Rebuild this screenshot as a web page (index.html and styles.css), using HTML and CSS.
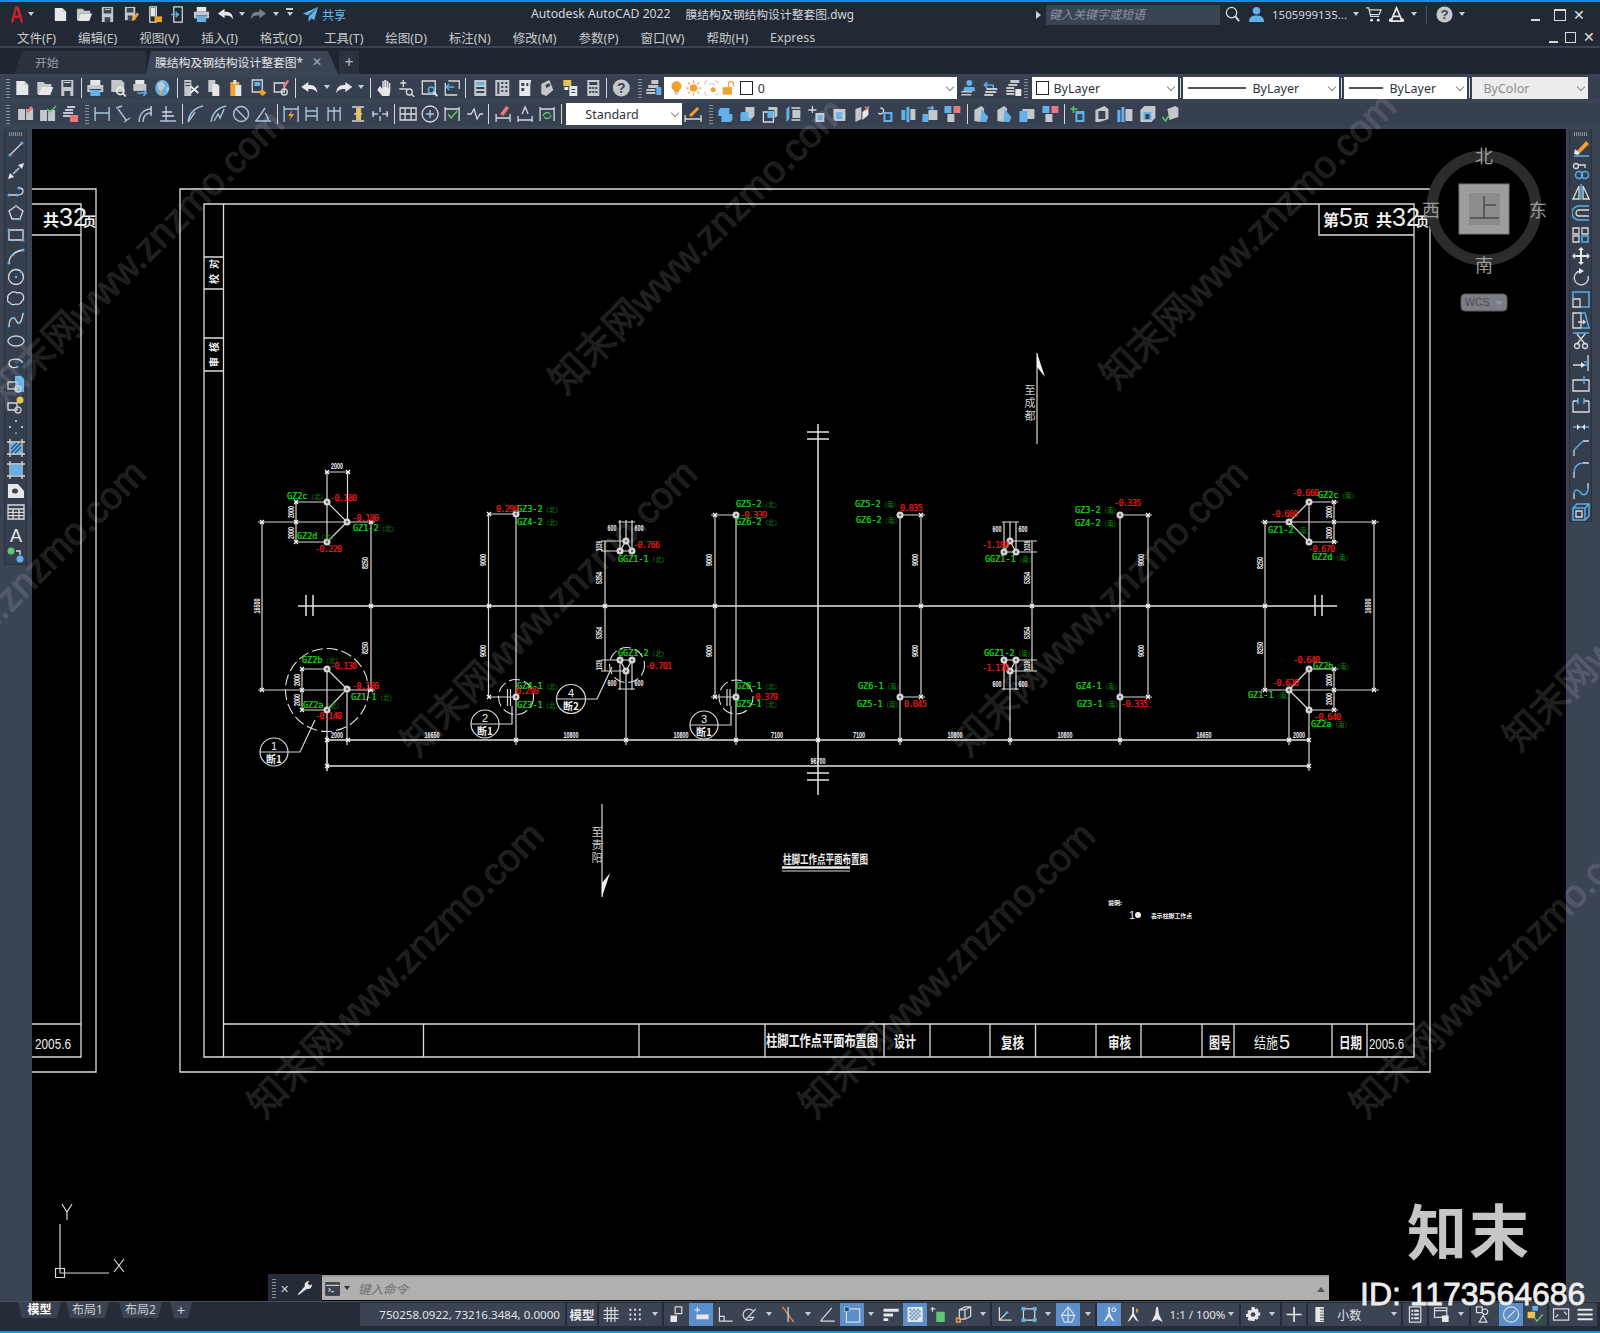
FILE: index.html
```html
<!DOCTYPE html>
<html lang="zh">
<head>
<meta charset="utf-8">
<title>Autodesk AutoCAD 2022</title>
<link rel="stylesheet" href="styles.css">
</head>
<body>
<svg class="defs" xmlns="http://www.w3.org/2000/svg">
<symbol id="new" viewBox="0 0 18 18"><path class="fw" d="M3 2h8l4 4v10H3z"/><path class="fg2" d="M11 2v4h4z"/></symbol>
<symbol id="open" viewBox="0 0 18 18"><path class="fg2" d="M1 3h6l2 2h6v3H5l-2 7H1z"/><path class="fw" d="M5 8h12l-3 8H2z"/></symbol>
<symbol id="save" viewBox="0 0 18 18"><path class="fg2" d="M3 1h12v16H3z"/><path class="fd" d="M5 2h8v6H5zM6 12h6v5H6z"/><path class="fw" d="M6 3h6v1H6z"/></symbol>
<symbol id="saveas" viewBox="0 0 18 18"><path class="fg2" d="M2 1h11v14H2z"/><path class="fd" d="M4 2h7v5H4zM5 10h5v5H5z"/><path class="fo" d="M9 16l1-3 5-6 2 2-5 6z"/></symbol>
<symbol id="sheetset" viewBox="0 0 18 18"><path class="w" d="M4 1h7v16H4z"/><path class="fw" d="M5 2h5v9H5z"/><path class="fo" d="M9 11h8v6H9z"/></symbol>
<symbol id="phone" viewBox="0 0 18 18"><path class="w" d="M4 1h9v16H4z"/><path class="bs" d="M1 9h8M6 6l3 3-3 3"/></symbol>
<symbol id="print" viewBox="0 0 18 18"><path class="fw" d="M4 1h10v5H4z"/><path class="fg2" d="M1 6h16v7H1z"/><path class="fd" d="M3 10h12v1H3z"/><path class="fb" d="M4 11h10v6H4z"/></symbol>
<symbol id="preview" viewBox="0 0 18 18"><path class="fg2" d="M2 1h10l3 3v9H2z"/><circle class="w2" cx="11" cy="12" r="3.5"/><path class="w2" d="M13.5 14.500l3 3"/></symbol>
<symbol id="publish" viewBox="0 0 18 18"><path class="fw" d="M4 1h9v4H4z"/><path class="fg2" d="M2 5h13v7H2z"/><path class="bs" d="M6 14h9M12 11l3 3-3 3"/></symbol>
<symbol id="globe" viewBox="0 0 18 18"><path class="fb" d="M8 1a7 8 0 1 1-.1 0z"/><path class="fg2" d="M3 5l5-3 3 5-4 5-3-2zM12 8l3 1-2 5z"/><path class="fo" d="M5 12h3v3H5z"/></symbol>
<symbol id="cut" viewBox="0 0 18 18"><path class="fg2" d="M2 1h7v16H2z"/><path class="fd" d="M3 3h5v1H3zM3 6h5v1H3z"/><path class="w2" d="M8 7l8 7M16 7l-8 7"/></symbol>
<symbol id="copy" viewBox="0 0 18 18"><path class="fg2" d="M3 1h7v12H3z"/><path class="fw" d="M7 5h5l2 2v10H7z"/></symbol>
<symbol id="paste" viewBox="0 0 18 18"><path class="fo" d="M3 3h9v14H3z"/><path class="fw" d="M6 1h3v4H6zM8 6h6v11H8z"/></symbol>
<symbol id="match" viewBox="0 0 18 18"><path class="w" d="M2 1h10v12H2z"/><path class="fb" d="M4 3h6v4H4z"/><path class="fo" d="M8 13l4-3 4 4-4 3z"/></symbol>
<symbol id="brush" viewBox="0 0 18 18"><path class="w" d="M2 4h10v9H2z"/><circle class="w" cx="12" cy="13" r="3"/><path class="fr" d="M10 7l5-6 2 1-4 6z"/></symbol>
<symbol id="undo" viewBox="0 0 18 18"><path class="fw" d="M1 8l7-5v3h2c4 0 7 3 7 8-2-3-4-4-7-4H8v3z"/></symbol>
<symbol id="redo" viewBox="0 0 18 18"><path class="fw" d="M17 8l-7-5v3H8c-4 0-7 3-7 8 2-3 4-4 7-4h2v3z"/></symbol>
<symbol id="pan" viewBox="0 0 18 18"><path class="fw" d="M4 8l1-1 2 3V2h1.500v6h.5V1h2v7h.5V2h1.500v7h.5V4h1.500v8l-1 5H7L2 11z"/></symbol>
<symbol id="zoomrt" viewBox="0 0 18 18"><path class="w" d="M6 1v7M3 4h6M2 10h8"/><circle class="w" cx="12" cy="13" r="3"/><path class="w" d="M14 15l3 3"/></symbol>
<symbol id="zoomwin" viewBox="0 0 18 18"><path class="w" d="M2 2h13v13H2z"/><circle class="bs" cx="11" cy="11" r="3"/><path class="w2" d="M13 13l4 4"/></symbol>
<symbol id="zoomprev" viewBox="0 0 18 18"><path class="w" d="M2 4v12h12M5 2h11v8"/><path class="bs" d="M3 8h8M6 5L3 8l3 3"/></symbol>
<symbol id="prop" viewBox="0 0 18 18"><path class="fg2" d="M3 1h12v16H3z"/><path class="fb" d="M5 3h8v3H5z"/><path class="fd" d="M5 8h8v2H5zM5 12h8v2H5z"/></symbol>
<symbol id="design" viewBox="0 0 18 18"><path class="fg2" d="M2 1h14v16H2z"/><path class="fd" d="M4 3h2v12H4zM8 3h2v2H8zM8 7h2v2H8zM8 11h2v2H8zM12 3h2v2h-2zM12 7h2v2h-2zM12 11h2v2h-2z"/></symbol>
<symbol id="toolp" viewBox="0 0 18 18"><path class="fw" d="M3 1h12l-1 4v12H3z"/><path class="fd" d="M5 4h3v3H5zM5 9h3v3H5zM10 4h2v3h-2z"/></symbol>
<symbol id="sheet" viewBox="0 0 18 18"><path class="fg2" d="M3 5l8-4 4 10-7 6-5-2z"/><path class="fd" d="M7 6l4-2 1 3-4 2z"/></symbol>
<symbol id="mark" viewBox="0 0 18 18"><path class="fy" d="M2 1h8v6H2z"/><path class="fw" d="M8 7h8v10H8zM3 8h4v3H3z"/><path class="fd" d="M10 10h4v1h-4zM10 13h4v1h-4z"/></symbol>
<symbol id="calc" viewBox="0 0 18 18"><path class="fg2" d="M3 1h12v16H3z"/><path class="fd" d="M5 3h8v3H5zM5 8h2v2H5zM8 8h2v2H8zM11 8h2v2h-2zM5 12h2v2H5zM8 12h2v2H8zM11 12h2v2h-2z"/></symbol>
<symbol id="help" viewBox="0 0 18 18"><circle class="fg2" cx="9" cy="9" r="8.500"/><text class="qm" x="9" y="14">?</text></symbol>
<symbol id="layers" viewBox="0 0 18 18"><path class="fg2" d="M7 1h7v4H7zM4 6h10v3H4zM2 10h9v2H2zM2 13h9v2H2z"/><path class="fb" d="M12 8h5v8h-5z"/></symbol>
<symbol id="bulb" viewBox="0 0 18 18"><circle class="fo" cx="9" cy="7" r="6"/><path class="fo" d="M6 11h6v3H6z"/><path class="fg2" d="M7 14h4v3H7z"/></symbol>
<symbol id="sun" viewBox="0 0 18 18"><circle class="fo" cx="9" cy="9" r="4.500"/><path class="os" d="M9 0v3M9 15v3M0 9h3M15 9h3M2.500 2.500l2 2M13.500 13.500l2 2M2.500 15.500l2-2M13.500 4.500l2-2"/></symbol>
<symbol id="freeze" viewBox="0 0 18 18"><path class="gy" d="M1 5V1h4M13 1h4v4M1 13v4h4M13 17h4v-4"/><circle class="fo" cx="11" cy="11" r="3"/><path class="gy" d="M6 4h6v3"/></symbol>
<symbol id="lock" viewBox="0 0 18 18"><path class="fo" d="M2 8h11v9H2z"/><path class="os" d="M9 8V4a3 3 0 0 1 6 0v3"/></symbol>
<symbol id="lay1" viewBox="0 0 18 18"><circle class="fb" cx="10" cy="4" r="3"/><path class="fb" d="M5 8h10l1 4H4z"/><path class="fg2" d="M2 12h11v1.500H2zM2 15h10v1.500H2z"/></symbol>
<symbol id="lay2" viewBox="0 0 18 18"><path class="bs" d="M3 6h9M6 3L3 6l3 3M12 6v5"/><path class="fg2" d="M5 9h11v2H5zM4 12h11v2H4zM3 15h9v2H3z"/></symbol>
<symbol id="lay3" viewBox="0 0 18 18"><path class="fg2" d="M6 1h9v3H6zM4 5h9v2H4zM2 8h8v2H2zM2 11h8v2H2zM2 14h8v2H2z"/><path class="fw" d="M11 10h6v7h-6z"/></symbol>
<symbol id="dim1" viewBox="0 0 18 18"><path class="fg2" d="M1 4h7v11H1zM9 4h7v11H9z"/><path class="fr" d="M9 6l5-5 2 2-5 5z"/></symbol>
<symbol id="dim2" viewBox="0 0 18 18"><path class="fg2" d="M1 5h7v11H1zM9 5h7v11H9z"/><path class="gs" d="M8 4l3 3 6-6"/></symbol>
<symbol id="dim3" viewBox="0 0 18 18"><path class="fg2" d="M6 1h8v2H6zM4 4h8v2H4zM2 7h10v2H2zM2 10h10v2H2z"/><path class="fr" d="M9 10h8v7H9z"/></symbol>
<symbol id="linear" viewBox="0 0 18 18"><path class="b" d="M2 2v14M16 2v14M2 8h14"/></symbol>
<symbol id="aligned" viewBox="0 0 18 18"><path class="b" d="M1 3l6-2M9 17l6-4M3 4l8 11"/></symbol>
<symbol id="darc" viewBox="0 0 18 18"><path class="b" d="M2 17c0-8 5-13 12-13M6 17c0-6 3-9 8-9"/><path class="w" d="M14 1v10"/></symbol>
<symbol id="ordin" viewBox="0 0 18 18"><path class="b" d="M1 16h16M7 1v15"/><path class="w" d="M3 7h10M3 11h12"/></symbol>
<symbol id="radius" viewBox="0 0 18 18"><path class="b" d="M1 17C2 9 7 3 16 1M1 17L8 7"/></symbol>
<symbol id="jogr" viewBox="0 0 18 18"><path class="b" d="M1 17C2 9 7 3 16 1M4 16l4-7 2 4 4-9"/></symbol>
<symbol id="diam" viewBox="0 0 18 18"><circle class="b" cx="9" cy="9" r="7.500"/><path class="b" d="M4 4l10 10"/></symbol>
<symbol id="angle" viewBox="0 0 18 18"><path class="b" d="M1 16h16M2 16L11 3M11 8c2 2 3 5 3 8"/></symbol>
<symbol id="quick" viewBox="0 0 18 18"><path class="b" d="M2 1v16M16 1v16M2 4h14"/><path class="fo" d="M10 5L6 11h3l-2 5 5-7H9z"/></symbol>
<symbol id="base" viewBox="0 0 18 18"><path class="b" d="M2 2v14M13 2v14M2 6h11M2 11h11"/></symbol>
<symbol id="cont" viewBox="0 0 18 18"><path class="b" d="M2 2v14M8 2v14M14 2v14M2 6h12"/></symbol>
<symbol id="space" viewBox="0 0 18 18"><path class="w" d="M3 2h12M3 16h12M5 9h8"/><path class="fy" d="M7 3h5v12H7z"/></symbol>
<symbol id="dbreak" viewBox="0 0 18 18"><path class="b" d="M1 9h6M11 9h6M9 2v5M9 11v5"/><path class="w" d="M2 6v6M16 6v6"/></symbol>
<symbol id="toler" viewBox="0 0 18 18"><path class="w" d="M1 3h16v12H1zM1 9h16M6 3v12M12 3v12"/></symbol>
<symbol id="center" viewBox="0 0 18 18"><circle class="w" cx="9" cy="9" r="8"/><path class="b" d="M9 5v8M5 9h8"/></symbol>
<symbol id="insp" viewBox="0 0 18 18"><path class="w" d="M2 2v14M16 2v14M2 4h14"/><path class="gs" d="M5 9l3 4 6-7"/></symbol>
<symbol id="jogl" viewBox="0 0 18 18"><path class="w" d="M1 9h4l3-5 3 10 3-5h3"/></symbol>
<symbol id="dedit" viewBox="0 0 18 18"><path class="w" d="M2 9v8M16 9v8M2 13h14"/><path class="fr" d="M6 9l6-8 3 2-6 8z"/></symbol>
<symbol id="dtedit" viewBox="0 0 18 18"><path class="w" d="M2 11v6M16 11v6M2 15h14M6 9l3-7 3 7"/></symbol>
<symbol id="dupd" viewBox="0 0 18 18"><path class="w" d="M2 2v14M16 2v14M2 4h14"/><path class="gs" d="M5 11a4 4 0 0 1 7-2M13 10a4 4 0 0 1-7 2"/></symbol>
<symbol id="dstyle" viewBox="0 0 18 18"><path class="w" d="M1 10v7M17 10v7M1 14h16"/><path class="fo" d="M5 10l8-8 2 2-8 8z"/></symbol>
<symbol id="uni" viewBox="0 0 18 18"><path class="fb" d="M4 3h9v6h3v6l-2 2H5v-6H2V6z"/></symbol>
<symbol id="sub" viewBox="0 0 18 18"><path class="fg2" d="M7 2h9v9l-2 2H7z"/><path class="fb" d="M3 7h7v6h4l-2 3H2V9z"/></symbol>
<symbol id="inter" viewBox="0 0 18 18"><path class="fg2" d="M7 2h9v9l-3 2V5H7z"/><path class="w" d="M2 7h10v10H2z"/><path class="fb" d="M6 6h6v7H6z"/></symbol>
<symbol id="imprint" viewBox="0 0 18 18"><path class="fb" d="M2 4l3-3v13l-3 3z"/><path class="w" d="M7 3h9M7 15h9"/><path class="fg2" d="M8 5h8v8H8z"/></symbol>
<symbol id="extru" viewBox="0 0 18 18"><path class="fg2" d="M7 5h9v10H7z"/><path class="fb" d="M1 9h6v8H1z"/><path class="bs" d="M6 3h6M10 1l2 2-2 2"/></symbol>
<symbol id="shell" viewBox="0 0 18 18"><path class="fg2" d="M4 4h12v12H6l-2-2z"/><path class="fb" d="M7 7h6v7H7z"/></symbol>
<symbol id="move3d" viewBox="0 0 18 18"><path class="w" d="M5 1v7M1 5h8"/><path class="fg2" d="M8 8h9v9H8z"/><path class="fb" d="M10 10h5v5h-5z"/></symbol>
<symbol id="slice" viewBox="0 0 18 18"><path class="fg2" d="M3 4l6-2v12l-6 3z"/><path class="fw" d="M10 7l6-5v8l-6 5z"/><path class="fr" d="M13 1l4 4-1 1-4-4zM17 2l-4 4-1-1 4-4z"/></symbol>
<symbol id="rot3d" viewBox="0 0 18 18"><path class="w" d="M5 3a3 3 0 1 1-2 5"/><path class="fb" d="M8 7h9v10H8z"/><path class="fd" d="M10 9h5v6h-5z"/></symbol>
<symbol id="wedge" viewBox="0 0 18 18"><path class="fg2" d="M2 16V5l7-4 3 3-4 13z"/><path class="fb" d="M9 4l7 8-2 5H8z"/></symbol>
<symbol id="sect" viewBox="0 0 18 18"><path class="fg2" d="M4 4h12v10H4z"/><path class="fb" d="M1 6h8v11H1z"/></symbol>
<symbol id="faces" viewBox="0 0 18 18"><path class="fb" d="M6 2h3v15H6zM2 5h3v12H2z"/><path class="fg2" d="M10 4h7v12h-7z"/></symbol>
<symbol id="boxes" viewBox="0 0 18 18"><path class="fb" d="M1 1h7v7H1z"/><path class="fr" d="M10 1h7v7h-7z"/><path class="fg2" d="M4 9h7v8H4z"/></symbol>
<symbol id="plus3d" viewBox="0 0 18 18"><path class="gs" d="M4 1v7M1 4h7"/><path class="fb" d="M6 6h9v11H6z"/><path class="fd" d="M8 9h5v6H8z"/></symbol>
<symbol id="cube" viewBox="0 0 18 18"><path class="fg2" d="M3 5l9-4 4 3v10l-9 3H3z"/><path class="fd" d="M6 6h7v8H6z"/></symbol>
<symbol id="half" viewBox="0 0 18 18"><path class="fb" d="M8 2h3v15H8zM3 5h4v10H3z"/><path class="fg2" d="M12 4h5v11h-5z"/></symbol>
<symbol id="box3" viewBox="0 0 18 18"><path class="fg2" d="M2 5l4-4h11v12l-4 4H2z"/><path class="fb" d="M5 7h8v8H5z"/><path class="fd" d="M7 9h4v5H7z"/></symbol>
<symbol id="check3" viewBox="0 0 18 18"><path class="fg2" d="M6 4l8-3 3 2v9l-9 3z"/><path class="gs" d="M1 12l3 4 4-6"/></symbol>
<symbol id="l1" viewBox="0 0 18 18"><path class="w" d="M3 15L15 3"/><circle class="fb" cx="3" cy="15" r="1.500"/><circle class="fb" cx="15" cy="3" r="1.500"/></symbol>
<symbol id="l2" viewBox="0 0 18 18"><path class="w" d="M6 12l6-6"/><path class="fw" d="M1 17l2-6 4 4zM17 1l-2 6-4-4z"/><circle class="fb" cx="9" cy="9" r="1.300"/></symbol>
<symbol id="l3" viewBox="0 0 18 18"><path class="w" d="M2 12h8c4 0 6-2 6-4s-2-3-4-3"/><circle class="fb" cx="2" cy="12" r="1.500"/><circle class="fb" cx="10" cy="12" r="1.500"/><circle class="fb" cx="12" cy="5" r="1.500"/></symbol>
<symbol id="l4" viewBox="0 0 18 18"><path class="w" d="M9 2l7 5-3 8H5L2 7z"/><circle class="fb" cx="9" cy="2" r="1.300"/><circle class="fb" cx="13" cy="15" r="1.300"/></symbol>
<symbol id="l5" viewBox="0 0 18 18"><path class="w" d="M2 4h14v10H2z"/><circle class="fb" cx="2" cy="4" r="1.500"/><circle class="fb" cx="16" cy="14" r="1.500"/></symbol>
<symbol id="l6" viewBox="0 0 18 18"><path class="w" d="M2 16c0-7 6-12 14-13"/><circle class="fb" cx="2" cy="16" r="1.500"/><circle class="fb" cx="6" cy="8" r="1.300"/><circle class="fb" cx="16" cy="3" r="1.500"/></symbol>
<symbol id="l7" viewBox="0 0 18 18"><circle class="w" cx="9" cy="9" r="7.500"/><circle class="fb" cx="9" cy="9" r="1.300"/><circle class="fb" cx="14" cy="4" r="1.300"/></symbol>
<symbol id="l8" viewBox="0 0 18 18"><path class="w" d="M4 3c2-2 5-1 6 0 2-1 5 0 6 2 1 2 1 5-1 6-1 3-4 4-6 3-2 1-5 1-6-1-3-1-3-4-2-5-1-2 1-4 3-5z"/></symbol>
<symbol id="l9" viewBox="0 0 18 18"><path class="w" d="M2 15c0-5 2-9 5-8s2 6 5 5 3-6 4-9"/><circle class="fb" cx="2" cy="15" r="1.300"/><circle class="fb" cx="7" cy="7" r="1.300"/><circle class="fb" cx="12" cy="12" r="1.300"/><circle class="fb" cx="16" cy="3" r="1.300"/></symbol>
<symbol id="l10" viewBox="0 0 18 18"><ellipse class="w" cx="9" cy="9" rx="8" ry="5"/><circle class="fb" cx="1" cy="9" r="1.300"/><circle class="fb" cx="9" cy="4" r="1.300"/><circle class="fb" cx="17" cy="9" r="1.300"/></symbol>
<symbol id="l11" viewBox="0 0 18 18"><path class="w" d="M15 8c-2-4-13-4-13 1s5 5 8 4"/><circle class="fb" cx="15" cy="8" r="1.300"/><circle class="fb" cx="10" cy="13" r="1.300"/></symbol>
<symbol id="l12" viewBox="0 0 18 18"><path class="fb" d="M8 1h6l3 3v13H8z"/><path class="wd" d="M1 7h9v7H1z"/><circle class="wd" cx="11" cy="14" r="3"/></symbol>
<symbol id="l13" viewBox="0 0 18 18"><path class="w" d="M1 7h9v7H1z"/><circle class="fy" cx="13" cy="4" r="3.500"/><circle class="wd" cx="11" cy="14" r="3"/></symbol>
<symbol id="l14" viewBox="0 0 18 18"><circle class="fw" cx="9" cy="3" r="1"/><circle class="fw" cx="3" cy="9" r="1"/><circle class="fw" cx="15" cy="9" r="1"/><circle class="fb" cx="9" cy="15" r="1"/></symbol>
<symbol id="l15" viewBox="0 0 18 18"><path class="w" d="M3 0v18M15 0v18M0 3h18M0 15h18"/><path class="fb" d="M4 4h10v10H4z"/><path class="ds" d="M4 10l6-6M4 14l10-10M8 14l6-6"/></symbol>
<symbol id="l16" viewBox="0 0 18 18"><path class="w" d="M3 0v18M15 0v18M0 3h18M0 15h18"/><path class="fb" d="M4 4h10v10H4z"/></symbol>
<symbol id="l17" viewBox="0 0 18 18"><path class="fw" d="M1 2h10l6 7v7H1z"/><ellipse class="fd" cx="8" cy="9" rx="3" ry="2.500"/></symbol>
<symbol id="l18" viewBox="0 0 18 18"><path class="w" d="M1 2h16v14H1zM1 6h16M1 9.300h16M1 12.600h16M6 6v10M12 6v10"/></symbol>
<symbol id="l19" viewBox="0 0 18 18"><text class="atxt" x="9" y="17">A</text></symbol>
<symbol id="l20" viewBox="0 0 18 18"><circle class="fgr" cx="4" cy="5" r="3.500"/><circle class="fb" cx="13" cy="13" r="3.500"/><path class="w" d="M9 5h4v4"/></symbol>
<symbol id="r1" viewBox="0 0 18 18"><path class="fo" d="M5 11L14 1l3 3-9 9z"/><path class="fw" d="M3 9l5 4-2 2-4-1z"/><path class="bs" d="M2 16h15"/></symbol>
<symbol id="r2" viewBox="0 0 18 18"><circle class="w" cx="4" cy="4" r="2.500"/><path class="w" d="M7 3h6v3"/><circle class="bs" cx="7" cy="13" r="3.500"/><circle class="bs" cx="13" cy="13" r="3.500"/></symbol>
<symbol id="r3" viewBox="0 0 18 18"><path class="w" d="M7 3v13H1zM11 3v13h6z"/><path class="bs" d="M9 1v16"/></symbol>
<symbol id="r4" viewBox="0 0 18 18"><path class="bs" d="M17 2H7a6.500 6.500 0 0 0 0 14h10"/><path class="w" d="M17 6H7a2.500 2.500 0 0 0 0 6h10"/></symbol>
<symbol id="r5" viewBox="0 0 18 18"><path class="w" d="M1 2h6v6H1zM10 2h6v6h-6zM1 10h6v6H1z"/><path class="bs" d="M10 10h6v6h-6z"/></symbol>
<symbol id="r6" viewBox="0 0 18 18"><path class="fw" d="M9 0l3 3h-2v5h5V6l3 3-3 3v-2h-5v5h2l-3 3-3-3h2v-5H3v2L0 9l3-3v2h5V3H6z"/></symbol>
<symbol id="r7" viewBox="0 0 18 18"><path class="w" d="M8 3a7 7 0 1 0 8 5"/><path class="fw" d="M7 0l5 3-5 3z"/></symbol>
<symbol id="r8" viewBox="0 0 18 18"><path class="bs" d="M1 8V2h16v15H8"/><path class="w" d="M1 9h7v8H1z"/></symbol>
<symbol id="r9" viewBox="0 0 18 18"><path class="w" d="M1 2h8v15H1z"/><path class="bs" d="M9 2h4l4 15h-8"/><path class="w" d="M6 11h7M11 9l2 2-2 2"/></symbol>
<symbol id="r10" viewBox="0 0 18 18"><path class="bs" d="M1 1h16"/><path class="w" d="M5 2l8 10M13 2L5 12"/><circle class="w" cx="5" cy="14" r="2.500"/><circle class="w" cx="13" cy="14" r="2.500"/></symbol>
<symbol id="r11" viewBox="0 0 18 18"><path class="w" d="M16 1v16M1 11h9"/><path class="bs" d="M10 11h6M12 8h4"/><path class="fw" d="M9 8l4 3-4 3z"/></symbol>
<symbol id="r12" viewBox="0 0 18 18"><path class="w" d="M1 5h16v11H1z"/><path class="bs" d="M12 1v8"/></symbol>
<symbol id="r13" viewBox="0 0 18 18"><path class="w" d="M1 5h5M12 5h5M1 5v11h16V5"/><path class="bs" d="M6 2v6M12 2v6"/></symbol>
<symbol id="r14" viewBox="0 0 18 18"><path class="bs" d="M1 9h16"/><path class="fw" d="M5 6l3 3-3 3zM13 6l-3 3 3 3z"/></symbol>
<symbol id="r15" viewBox="0 0 18 18"><path class="w" d="M2 17v-6M11 2h6"/><path class="bs" d="M2 11l9-9"/></symbol>
<symbol id="r16" viewBox="0 0 18 18"><path class="w" d="M2 17v-6M11 2h6"/><path class="bs" d="M2 11a9 9 0 0 1 9-9"/></symbol>
<symbol id="r17" viewBox="0 0 18 18"><path class="w" d="M2 17v-5M16 1v5"/><path class="bs" d="M2 12c0-6 5-4 7-1s7 2 7-5"/></symbol>
<symbol id="r18" viewBox="0 0 18 18"><path class="bs" d="M5 1h12v12l-4 4H1V5zM1 5h12v12M13 5l4-4"/><path class="w" d="M4 8h6v6H4z"/></symbol>
<symbol id="grid" viewBox="0 0 18 18"><path class="w" d="M5 1v16M9 1v16M13 1v16M1 5h16M1 9h16M1 13h16"/></symbol>
<symbol id="dots" viewBox="0 0 18 18"><path class="fw" d="M3 3h2v2H3zM8 3h2v2H8zM13 3h2v2h-2zM3 8h2v2H3zM8 8h2v2H8zM13 8h2v2h-2zM3 13h2v2H3zM8 13h2v2H8zM13 13h2v2h-2z"/></symbol>
<symbol id="s1" viewBox="0 0 18 18"><path class="w" d="M8 1h7v7H8z"/><path class="fw" d="M3 10h7v7H3z"/></symbol>
<symbol id="s2" viewBox="0 0 18 18"><path class="w" d="M5 1v6M2 4h6"/><path class="fw" d="M4 9h13v5H4z"/></symbol>
<symbol id="s3" viewBox="0 0 18 18"><path class="w" d="M3 1v15h14M3 11h5v5"/></symbol>
<symbol id="s4" viewBox="0 0 18 18"><path class="w" d="M13 5a6 6 0 1 0 1 7H9"/><path class="w" d="M5 15L16 3"/></symbol>
<symbol id="s5" viewBox="0 0 18 18"><path class="o2" d="M3 1l12 16"/><path class="w" d="M9 1v16"/></symbol>
<symbol id="s6" viewBox="0 0 18 18"><path class="w" d="M2 16L14 2M2 16h15"/></symbol>
<symbol id="s7" viewBox="0 0 18 18"><path class="w" d="M3 3h14v14H3z"/><path class="bs2" d="M1 1h5v5H1z"/></symbol>
<symbol id="s8" viewBox="0 0 18 18"><path class="fw" d="M1 3h16v3H1zM1 8h10v3H1zM1 13h5v3H1z"/></symbol>
<symbol id="s9" viewBox="0 0 18 18"><path class="fw" d="M1 1h16v16H1z"/><path class="ds2" d="M3 3h2v2H3zM7 3h2v2H7zM11 3h2v2h-2zM5 5h2v2H5zM9 5h2v2H9zM13 5h2v2h-2zM3 7h2v2H3zM7 7h2v2H7zM11 7h2v2h-2zM5 9h2v2H5zM9 9h2v2H9zM13 9h2v2h-2zM3 11h2v2H3zM7 11h2v2H7zM11 11h2v2h-2zM5 13h2v2H5zM9 13h2v2H9z"/></symbol>
<symbol id="s10" viewBox="0 0 18 18"><path class="fgr" d="M6 6h9v11H6z"/><path class="w" d="M2 1v5M0 3h5"/></symbol>
<symbol id="s11" viewBox="0 0 18 18"><path class="w" d="M5 4l6-3h6v10l-6 3H5zM5 4h6v10M11 4l6-3"/><path class="os" d="M2 13h4v4H2z"/></symbol>
<symbol id="s12" viewBox="0 0 18 18"><path class="w" d="M4 1v14h13M4 15l8-8"/><circle class="fb" cx="12" cy="7" r="1.500"/></symbol>
<symbol id="s13" viewBox="0 0 18 18"><path class="w" d="M3 3h12v12H3z"/><path class="fb" d="M1 1h4v4H1zM13 1h4v4h-4zM1 13h4v4H1zM13 13h4v4h-4z"/></symbol>
<symbol id="s14" viewBox="0 0 18 18"><path class="w" d="M9 1l7 9-3 7H5l-3-7zM2 10h14M9 1v16"/></symbol>
<symbol id="s15" viewBox="0 0 18 18"><path class="fw" d="M8 1h2v7l5 9-3-2-3-4-3 4-3 2 5-9z"/><circle class="w" cx="14" cy="4" r="2"/></symbol>
<symbol id="s16" viewBox="0 0 18 18"><path class="fw" d="M8 1h2v7l5 9-3-2-3-4-3 4-3 2 5-9z"/><path class="fo" d="M12 3h2v4h-2z"/></symbol>
<symbol id="s17" viewBox="0 0 18 18"><path class="fw" d="M8 1h2l1 8 4 8-6-3-6 3 4-8z"/></symbol>
<symbol id="gear" viewBox="0 0 18 18"><path class="fw" d="M7.500 1h3l.5 2.500 2-1 2 2-1 2 2.500.500v3l-2.500.5 1 2-2 2-2-1-.5 2.500h-3L7 15l-2 1-2-2 1-2L1.500 11.500v-3L4 8 3 6l2-2 2 1z"/><circle class="fd" cx="9" cy="9" r="2.500"/></symbol>
<symbol id="plus" viewBox="0 0 18 18"><path class="w2" d="M9 1v16M1 9h16"/></symbol>
<symbol id="ruler" viewBox="0 0 18 18"><path class="fw" d="M4 1h9v16H4z"/><path class="fd" d="M9 3h4v1H9zM9 6h4v1H9zM9 9h4v1H9zM9 12h4v1H9zM9 15h4v1H9z"/></symbol>
<symbol id="clip" viewBox="0 0 18 18"><path class="w" d="M3 1h12v16H3z"/><path class="fw" d="M5 4h2v2H5zM8 4h5v2H8zM5 8h2v2H5zM8 8h5v2H8zM5 12h2v2H5zM8 12h5v2H8z"/></symbol>
<symbol id="lockw" viewBox="0 0 18 18"><path class="w" d="M2 2h13v10H2zM2 5h13"/><path class="fw" d="M10 10h7v7h-7z"/></symbol>
<symbol id="isoa" viewBox="0 0 18 18"><path class="w" d="M2 1h6v6H2zM11 3a3 3 0 1 1-.1 0zM5 17l4-7 4 7z"/></symbol>
<symbol id="hw" viewBox="0 0 18 18"><circle class="w" cx="9" cy="9" r="8"/><path class="w" d="M5 13L13 5"/></symbol>
<symbol id="isol" viewBox="0 0 18 18"><path class="fb" d="M6 0h6v5H6z"/><path class="fy" d="M1 6h8v7H1z"/><path class="gs" d="M8 12l3 4 6-7"/></symbol>
<symbol id="full" viewBox="0 0 18 18"><path class="w" d="M1 3h16v12H1zM3 12l3-3M12 6l3 3"/></symbol>
<symbol id="ham" viewBox="0 0 18 18"><path class="fw" d="M1 3h16v2H1zM1 8h16v2H1zM1 13h16v2H1z"/></symbol>
<symbol id="logo" viewBox="0 0 18 18"><path class="fred" d="M7 0h4l5 18h-3l-1-5H6l-1 5H2zM8.500 3L7 10h4z"/></symbol>
<symbol id="send" viewBox="0 0 18 18"><path class="fb" d="M17 1L1 8l5 2zM17 1L7 11v6l3-4 3 2z"/></symbol>
<symbol id="cart" viewBox="0 0 18 18"><path class="w" d="M1 2h3l2 9h9M5 4h12l-2 5H6"/><circle class="fw" cx="7" cy="15" r="1.500"/><circle class="fw" cx="14" cy="15" r="1.500"/></symbol>
<symbol id="aacc" viewBox="0 0 18 18"><path class="w2" d="M9 2L3 16h12zM5 11h8"/><circle class="fw" cx="3" cy="15" r="2"/><circle class="fw" cx="15" cy="15" r="2"/></symbol>
<symbol id="user" viewBox="0 0 18 18"><circle class="fb" cx="9" cy="5" r="4"/><path class="fb" d="M1 17c0-6 4-7 8-7s8 1 8 7z"/></symbol>
<symbol id="search" viewBox="0 0 18 18"><circle class="w" cx="8" cy="7" r="5.500"/><path class="w2" d="M12 11l4 5"/></symbol>
<symbol id="wrench" viewBox="0 0 18 18"><path class="fw" d="M3 17l-1-1 8-9c-1-3 1-6 5-6l-2 3 2 2 3-1c0 4-3 6-6 5z"/></symbol>
<symbol id="term" viewBox="0 0 18 18"><path class="tf" d="M1 2h15v14H1z"/><path class="wd" d="M1 5h15M4 8l2 2-2 2M7 12h3"/></symbol>
<symbol id="pt" viewBox="0 0 8 8"><circle class="ptf" cx="4" cy="4" r="3.500"/><circle class="ptc" cx="4" cy="4" r="1.200"/></symbol>
<symbol id="tk" viewBox="0 0 6 6"><path class="tkp" d="M1 5l4-4M1 1l4 4"/></symbol>
</svg>

<div class="app">
  <header class="titlebar">
    <svg class="logo"><use href="#logo"/></svg><i class="c lc"></i>
    <svg class="q"><use href="#new"/></svg><svg class="q"><use href="#open"/></svg><svg class="q"><use href="#save"/></svg><svg class="q"><use href="#saveas"/></svg><svg class="q"><use href="#sheetset"/></svg><svg class="q"><use href="#phone"/></svg><svg class="q"><use href="#print"/></svg><svg class="q"><use href="#undo"/></svg><i class="c n10"></i><svg class="q dim"><use href="#redo"/></svg><i class="c n10"></i><i class="c cbar"></i>
    <svg class="q"><use href="#send"/></svg><span class="share">共享</span>
    <span class="doc">Autodesk AutoCAD 2022</span><span class="doc file">膜结构及钢结构设计整套图.dwg</span>
    <div class="title-right">
      <i class="tri"></i>
      <span class="search">键入关键字或短语</span>
      <svg class="q sq"><use href="#search"/></svg>
      <svg class="q sq"><use href="#user"/></svg>
      <span class="acct">1505999135...</span><i class="c nar"></i>
      <svg class="q sq"><use href="#cart"/></svg>
      <svg class="q sq"><use href="#aacc"/></svg><i class="c nar"></i>
      <b class="vs"></b>
      <svg class="q sq"><use href="#help"/></svg><i class="c nar"></i>
      <div class="win"><span class="w-min"></span><span class="w-max"></span><span class="w-x">✕</span></div>
    </div>
  </header>

  <nav class="menubar">
    <span>文件(F)</span><span>编辑(E)</span><span>视图(V)</span><span>插入(I)</span><span>格式(O)</span><span>工具(T)</span><span>绘图(D)</span><span>标注(N)</span><span>修改(M)</span><span>参数(P)</span><span>窗口(W)</span><span>帮助(H)</span><span>Express</span>
    <div class="doc-win"><span class="w-min"></span><span class="w-rest"></span><span class="w-x">✕</span></div>
  </nav>

  <div class="tabs">
    <div class="tab start">开始</div>
    <div class="tab active"><span>膜结构及钢结构设计整套图*</span><b>✕</b></div>
    <div class="tab add">+</div>
  </div>

  <div class="toolbars">
    <div class="row r1">
      <i class="grip"></i>
      <svg class="i"><use href="#new"/></svg><svg class="i"><use href="#open"/></svg><svg class="i"><use href="#save"/></svg><b class="sep"></b>
      <svg class="i"><use href="#print"/></svg><svg class="i"><use href="#preview"/></svg><svg class="i"><use href="#publish"/></svg><svg class="i"><use href="#globe"/></svg><b class="sep"></b>
      <svg class="i"><use href="#cut"/></svg><svg class="i"><use href="#copy"/></svg><svg class="i"><use href="#paste"/></svg><svg class="i"><use href="#match"/></svg><svg class="i"><use href="#brush"/></svg><b class="sep"></b>
      <svg class="i"><use href="#undo"/></svg><i class="c"></i><svg class="i"><use href="#redo"/></svg><i class="c"></i><b class="sep"></b>
      <svg class="i"><use href="#pan"/></svg><svg class="i"><use href="#zoomrt"/></svg><svg class="i"><use href="#zoomwin"/></svg><svg class="i"><use href="#zoomprev"/></svg><b class="sep"></b>
      <svg class="i"><use href="#prop"/></svg><svg class="i"><use href="#design"/></svg><svg class="i"><use href="#toolp"/></svg><svg class="i"><use href="#sheet"/></svg><svg class="i"><use href="#mark"/></svg><svg class="i"><use href="#calc"/></svg><b class="sep"></b>
      <svg class="i"><use href="#help"/></svg>
      <i class="grip g2"></i>
      <svg class="i"><use href="#layers"/></svg>
      <div class="combo layer">
        <svg class="li"><use href="#bulb"/></svg><svg class="li"><use href="#sun"/></svg><svg class="li"><use href="#freeze"/></svg><svg class="li"><use href="#lock"/></svg>
        <b class="swatch"></b><span class="lname">0</span><i class="chev"></i>
      </div>
      <svg class="i"><use href="#lay1"/></svg><svg class="i"><use href="#lay2"/></svg><svg class="i"><use href="#lay3"/></svg>
      <i class="grip g3"></i>
      <div class="combo color"><b class="swatch"></b><span>ByLayer</span><i class="chev"></i></div><b class="sep tight"></b>
      <div class="combo ltype"><b class="lsample"></b><span>ByLayer</span><i class="chev"></i></div><b class="sep tight"></b>
      <div class="combo lweight"><b class="lsample"></b><span>ByLayer</span><i class="chev"></i></div><b class="sep tight"></b>
      <div class="combo bycolor"><span>ByColor</span><i class="chev"></i></div>
    </div>
    <div class="row r2">
      <i class="grip"></i>
      <svg class="i"><use href="#dim1"/></svg><svg class="i"><use href="#dim2"/></svg><svg class="i"><use href="#dim3"/></svg>
      <i class="grip g4"></i>
      <svg class="i"><use href="#linear"/></svg><svg class="i"><use href="#aligned"/></svg><svg class="i"><use href="#darc"/></svg><svg class="i"><use href="#ordin"/></svg><b class="sep"></b>
      <svg class="i"><use href="#radius"/></svg><svg class="i"><use href="#jogr"/></svg><svg class="i"><use href="#diam"/></svg><svg class="i"><use href="#angle"/></svg><b class="sep"></b>
      <svg class="i"><use href="#quick"/></svg><svg class="i"><use href="#base"/></svg><svg class="i"><use href="#cont"/></svg><svg class="i"><use href="#space"/></svg><svg class="i"><use href="#dbreak"/></svg><b class="sep"></b>
      <svg class="i"><use href="#toler"/></svg><svg class="i"><use href="#center"/></svg><svg class="i"><use href="#insp"/></svg><svg class="i"><use href="#jogl"/></svg><b class="sep"></b>
      <svg class="i"><use href="#dedit"/></svg><svg class="i"><use href="#dtedit"/></svg><svg class="i"><use href="#dupd"/></svg><b class="sep"></b>
      <div class="combo dstyle"><span>Standard</span><i class="chev"></i></div>
      <svg class="i"><use href="#dstyle"/></svg>
      <i class="grip g5"></i>
      <svg class="i t3"><use href="#uni"/></svg><svg class="i t3"><use href="#sub"/></svg><svg class="i t3"><use href="#inter"/></svg><svg class="i t3"><use href="#imprint"/></svg><svg class="i t3"><use href="#move3d"/></svg><svg class="i t3"><use href="#shell"/></svg><svg class="i t3"><use href="#slice"/></svg><svg class="i t3"><use href="#rot3d"/></svg><svg class="i t3"><use href="#half"/></svg><svg class="i t3"><use href="#extru"/></svg><svg class="i t3"><use href="#boxes"/></svg><b class="sep"></b>
      <svg class="i t3"><use href="#wedge"/></svg><svg class="i t3"><use href="#wedge"/></svg><svg class="i t3"><use href="#sect"/></svg><svg class="i t3"><use href="#boxes"/></svg><b class="sep"></b>
      <svg class="i t3"><use href="#plus3d"/></svg><svg class="i t3"><use href="#cube"/></svg><svg class="i t3"><use href="#faces"/></svg><svg class="i t3"><use href="#box3"/></svg><svg class="i t3"><use href="#check3"/></svg>
    </div>
  </div>

  <main class="workspace">
    <aside class="side left">
      <div class="vgroup">
        <i class="vgrip"></i>
        <svg class="v"><use href="#l1"/></svg><svg class="v"><use href="#l2"/></svg><svg class="v"><use href="#l3"/></svg><svg class="v"><use href="#l4"/></svg><svg class="v"><use href="#l5"/></svg><svg class="v"><use href="#l6"/></svg><svg class="v"><use href="#l7"/></svg><svg class="v"><use href="#l8"/></svg><svg class="v"><use href="#l9"/></svg><svg class="v"><use href="#l10"/></svg><svg class="v"><use href="#l11"/></svg><svg class="v"><use href="#l12"/></svg><svg class="v"><use href="#l13"/></svg><svg class="v"><use href="#l14"/></svg><svg class="v"><use href="#l15"/></svg><svg class="v"><use href="#l16"/></svg><svg class="v"><use href="#l17"/></svg><svg class="v"><use href="#l18"/></svg><svg class="v"><use href="#l19"/></svg><svg class="v"><use href="#l20"/></svg>
      </div>
    </aside>

    <section class="canvas">
      <svg class="cad" viewBox="32 129 1534 1172" xmlns="http://www.w3.org/2000/svg">
        <!-- sheets -->
        <path class="sh" d="M32 189H96V1072H32M32 204H81V1057H32M32 235H81M32 1024H81"/>
        <path class="sh" d="M180 189H1430V1072H180ZM204 204H1414V1057H204ZM223.500 204V1057M204 257H223.500M204 289H223.500M204 338H223.500M204 371H223.500M223.500 1024H1414M423.500 1024V1057M639 1024V1057M765 1024V1057M884 1024V1057M930 1024V1057M990 1024V1057M1035.500 1024V1057M1096 1024V1057M1141 1024V1057M1202 1024V1057M1234 1024V1057M1332 1024V1057M1367 1024V1057M1319 204V235H1414"/>
        <text class="cj big" x="43" y="226">共<tspan class="th">32</tspan></text><text class="cj pg" x="83" y="226">页</text>
        <text class="cj big" x="1323" y="226">第<tspan class="th">5</tspan>页</text><text class="cj big" x="1376" y="226">共<tspan class="th">32</tspan></text><text class="cj pg" x="1416" y="226">页</text>
        <text class="cj sm" transform="rotate(-90 218 284)" x="218" y="284" textLength="25">校对</text>
        <text class="cj sm" transform="rotate(-90 218 367)" x="218" y="367" textLength="25">审核</text>
        <text class="nt" x="35" y="1049" textLength="36" lengthAdjust="spacingAndGlyphs">2005.6</text>
        <text class="cj tb" x="766" y="1046" textLength="112" lengthAdjust="spacingAndGlyphs">柱脚工作点平面布置图</text>
        <text class="cj tb" x="894" y="1047" textLength="22" lengthAdjust="spacingAndGlyphs">设计</text>
        <text class="cj tb" x="1001" y="1048" textLength="23" lengthAdjust="spacingAndGlyphs">复核</text>
        <text class="cj tb" x="1108" y="1048" textLength="23" lengthAdjust="spacingAndGlyphs">审核</text>
        <text class="cj tb" x="1209" y="1048" textLength="22" lengthAdjust="spacingAndGlyphs">图号</text>
        <text class="cj tb thin" x="1254" y="1048" textLength="24" lengthAdjust="spacingAndGlyphs">结施</text><text class="th big5" x="1279" y="1049">5</text>
        <text class="cj tb" x="1339" y="1048" textLength="23" lengthAdjust="spacingAndGlyphs">日期</text>
        <text class="nt" x="1369" y="1049" textLength="35" lengthAdjust="spacingAndGlyphs">2005.6</text>

        <!-- axes -->
        <path class="ax" d="M298 606H1337M306 595V616M313 595V616M1315 595V616M1322 595V616M818 424V795M807 432H829M807 439H829M807 773H829M807 780H829M327 740H1309M327 766H1309"/>
        <!-- left groups -->
        <path class="ln" d="M327 502L347 522L327 542M327 472V542M347.500 472V522M325 472H350M296 502H327M296 542H327M296 502V542M258 522H375M262 522V690M371 522V690M327 669L347 689L327 710M327 669V771M347 689V745M302 669H327M302 710H327M302 669V710M258 690H375"/>
        <circle class="dash" cx="327" cy="690" r="41.500"/>
        <circle class="ln" cx="274" cy="752" r="14"/>
        <path class="ln" d="M260 752H300L315 720M516 514V745M488 514H516M488.500 514V697M488 697H516M507.500 689V706M510.500 689V706"/>
        <circle class="dash" cx="516" cy="697" r="17.500"/>
        <circle class="ln" cx="485" cy="724" r="14"/>
        <path class="ln" d="M471 724H512V706"/>
        <!-- ggz left -->
        <path class="ln" d="M605 541V671M601 541H626M601 551H620M601 660H620M601 671H626M620 520V551M626 520V541M632 520V551M618 522H635M620 551H632L626 541ZM620 660V690M626 671V745M632 660V690M618 689H635M620 660H632L626 671Z"/>
        <circle class="dash" cx="627" cy="665" r="17.500"/>
        <circle class="ln" cx="571" cy="699" r="14.500"/>
        <path class="ln" d="M556.500 699H597L612 667"/>
        <!-- x736 -->
        <path class="ln" d="M736 515V745M711 515H736M715 515V697M711 697H736M727 689V706M730 689V706"/>
        <circle class="dash" cx="736" cy="697" r="17"/>
        <circle class="ln" cx="704" cy="725" r="14"/>
        <path class="ln" d="M690 725H731V706"/>
        <!-- x900 -->
        <path class="ln" d="M900 515V745M900 515H925M921 515V697M900 697H925"/>
        <!-- ggz right -->
        <path class="ln" d="M1032 541V671M1010 541H1037M1016 552H1037M1016 660H1037M1010 671H1037M1004 522V552M1010 522V541M1016 522V552M1002 522H1019M1004 552H1016L1010 541ZM1004 660V690M1010 671V745M1016 660V690M1002 689H1019M1004 660H1016L1010 671Z"/>
        <!-- x1120 -->
        <path class="ln" d="M1120 515V745M1120 515H1152M1148 515V697M1120 697H1152"/>
        <!-- right groups -->
        <path class="ln" d="M1309 502L1289 522L1309 542M1309 502V542M1309 502H1338M1309 542H1338M1334 502V542M1261 522H1379M1374 522V690M1265 522V690M1309 669L1289 690L1309 710M1309 669V771M1289 690V745M1309 669H1338M1309 710H1338M1334 669V710M1261 690H1379M1309 736V771M327 736V771"/>
        <!-- section arrows -->
        <path class="ln" d="M1037 353V444M602 804V897"/>
        <path class="fwh" d="M1037 353L1045 377L1037 367ZM602 897L610 873L602 883Z"/>
        <text class="cj xs" x="1030" y="394">至</text><text class="cj xs" x="1030" y="407">成</text><text class="cj xs" x="1030" y="420">都</text>
        <text class="cj xs" x="597" y="836">至</text><text class="cj xs" x="597" y="849">贵</text><text class="cj xs" x="597" y="862">阳</text>
        <!-- ticks -->
        <g>
          <use href="#tk" x="259" y="519" width="6" height="6"/><use href="#tk" x="259" y="687" width="6" height="6"/><use href="#tk" x="293" y="519" width="6" height="6"/><use href="#tk" x="293" y="499" width="6" height="6"/><use href="#tk" x="293" y="539" width="6" height="6"/><use href="#tk" x="299" y="666" width="6" height="6"/><use href="#tk" x="299" y="687" width="6" height="6"/><use href="#tk" x="299" y="707" width="6" height="6"/><use href="#tk" x="368" y="519" width="6" height="6"/><use href="#tk" x="368" y="603" width="6" height="6"/><use href="#tk" x="368" y="687" width="6" height="6"/><use href="#tk" x="324" y="469" width="6" height="6"/><use href="#tk" x="345" y="469" width="6" height="6"/><use href="#tk" x="486" y="511" width="6" height="6"/><use href="#tk" x="486" y="603" width="6" height="6"/><use href="#tk" x="486" y="694" width="6" height="6"/><use href="#tk" x="602" y="603" width="6" height="6"/><use href="#tk" x="712" y="512" width="6" height="6"/><use href="#tk" x="712" y="603" width="6" height="6"/><use href="#tk" x="712" y="694" width="6" height="6"/><use href="#tk" x="918" y="512" width="6" height="6"/><use href="#tk" x="918" y="603" width="6" height="6"/><use href="#tk" x="918" y="694" width="6" height="6"/><use href="#tk" x="1029" y="603" width="6" height="6"/><use href="#tk" x="1145" y="512" width="6" height="6"/><use href="#tk" x="1145" y="603" width="6" height="6"/><use href="#tk" x="1145" y="694" width="6" height="6"/><use href="#tk" x="1262" y="519" width="6" height="6"/><use href="#tk" x="1262" y="603" width="6" height="6"/><use href="#tk" x="1262" y="687" width="6" height="6"/><use href="#tk" x="1371" y="519" width="6" height="6"/><use href="#tk" x="1371" y="687" width="6" height="6"/><use href="#tk" x="1331" y="519" width="6" height="6"/><use href="#tk" x="1331" y="499" width="6" height="6"/><use href="#tk" x="1331" y="539" width="6" height="6"/><use href="#tk" x="1331" y="666" width="6" height="6"/><use href="#tk" x="1331" y="687" width="6" height="6"/><use href="#tk" x="1331" y="707" width="6" height="6"/><use href="#tk" x="324" y="737" width="6" height="6"/><use href="#tk" x="345" y="737" width="6" height="6"/><use href="#tk" x="513" y="737" width="6" height="6"/><use href="#tk" x="623" y="737" width="6" height="6"/><use href="#tk" x="733" y="737" width="6" height="6"/><use href="#tk" x="815" y="737" width="6" height="6"/><use href="#tk" x="897" y="737" width="6" height="6"/><use href="#tk" x="1007" y="737" width="6" height="6"/><use href="#tk" x="1117" y="737" width="6" height="6"/><use href="#tk" x="1286" y="737" width="6" height="6"/><use href="#tk" x="1306" y="737" width="6" height="6"/><use href="#tk" x="324" y="763" width="6" height="6"/><use href="#tk" x="1306" y="763" width="6" height="6"/>
        </g>
        <!-- points -->
        <g>
          <use href="#pt" x="323" y="498" width="8" height="8"/><use href="#pt" x="343" y="518" width="8" height="8"/><use href="#pt" x="323" y="538" width="8" height="8"/><use href="#pt" x="323" y="665" width="8" height="8"/><use href="#pt" x="343" y="685" width="8" height="8"/><use href="#pt" x="323" y="706" width="8" height="8"/><use href="#pt" x="512" y="510" width="8" height="8"/><use href="#pt" x="512" y="693" width="8" height="8"/><use href="#pt" x="622" y="537" width="8" height="8"/><use href="#pt" x="616" y="547" width="8" height="8"/><use href="#pt" x="628" y="547" width="8" height="8"/><use href="#pt" x="616" y="656" width="8" height="8"/><use href="#pt" x="628" y="656" width="8" height="8"/><use href="#pt" x="622" y="667" width="8" height="8"/><use href="#pt" x="732" y="511" width="8" height="8"/><use href="#pt" x="732" y="693" width="8" height="8"/><use href="#pt" x="896" y="511" width="8" height="8"/><use href="#pt" x="896" y="693" width="8" height="8"/><use href="#pt" x="1006" y="537" width="8" height="8"/><use href="#pt" x="1000" y="548" width="8" height="8"/><use href="#pt" x="1012" y="548" width="8" height="8"/><use href="#pt" x="1000" y="656" width="8" height="8"/><use href="#pt" x="1012" y="656" width="8" height="8"/><use href="#pt" x="1006" y="667" width="8" height="8"/><use href="#pt" x="1116" y="511" width="8" height="8"/><use href="#pt" x="1116" y="693" width="8" height="8"/><use href="#pt" x="1305" y="498" width="8" height="8"/><use href="#pt" x="1285" y="518" width="8" height="8"/><use href="#pt" x="1305" y="538" width="8" height="8"/><use href="#pt" x="1305" y="665" width="8" height="8"/><use href="#pt" x="1285" y="686" width="8" height="8"/><use href="#pt" x="1305" y="706" width="8" height="8"/>
        </g>
        <!-- callout text -->
        <text class="ct" x="274" y="750">1</text><text class="cj cs" x="274" y="763">断1</text>
        <text class="ct" x="485" y="722">2</text><text class="cj cs" x="485" y="735">断1</text>
        <text class="ct" x="571" y="697">4</text><text class="cj cs" x="571" y="710">断2</text>
        <text class="ct" x="704" y="723">3</text><text class="cj cs" x="704" y="736">断1</text>

        <!-- dimension text -->
        <g>
          <text class="dt" x="337" y="469" textLength="12" lengthAdjust="spacingAndGlyphs">2000</text>
          <text class="dt" x="337" y="738" textLength="12" lengthAdjust="spacingAndGlyphs">2000</text>
          <text class="dt" x="432" y="738" textLength="15" lengthAdjust="spacingAndGlyphs">16650</text>
          <text class="dt" x="571" y="738" textLength="15" lengthAdjust="spacingAndGlyphs">10800</text>
          <text class="dt" x="681" y="738" textLength="15" lengthAdjust="spacingAndGlyphs">10800</text>
          <text class="dt" x="777" y="738" textLength="12" lengthAdjust="spacingAndGlyphs">7100</text>
          <text class="dt" x="859" y="738" textLength="12" lengthAdjust="spacingAndGlyphs">7100</text>
          <text class="dt" x="955" y="738" textLength="15" lengthAdjust="spacingAndGlyphs">10800</text>
          <text class="dt" x="1065" y="738" textLength="15" lengthAdjust="spacingAndGlyphs">10800</text>
          <text class="dt" x="1204" y="738" textLength="15" lengthAdjust="spacingAndGlyphs">16650</text>
          <text class="dt" x="1299" y="738" textLength="12" lengthAdjust="spacingAndGlyphs">2000</text>
          <text class="dt" x="818" y="764" textLength="15" lengthAdjust="spacingAndGlyphs">96700</text>
          <text class="dt" transform="rotate(-90 260 606)" x="260" y="606" textLength="15" lengthAdjust="spacingAndGlyphs">16500</text>
          <text class="dt" transform="rotate(-90 368 563)" x="368" y="563" textLength="12" lengthAdjust="spacingAndGlyphs">8250</text>
          <text class="dt" transform="rotate(-90 368 648)" x="368" y="648" textLength="12" lengthAdjust="spacingAndGlyphs">8250</text>
          <text class="dt" transform="rotate(-90 294 512)" x="294" y="512" textLength="12" lengthAdjust="spacingAndGlyphs">2000</text>
          <text class="dt" transform="rotate(-90 294 533)" x="294" y="533" textLength="12" lengthAdjust="spacingAndGlyphs">2000</text>
          <text class="dt" transform="rotate(-90 300 680)" x="300" y="680" textLength="12" lengthAdjust="spacingAndGlyphs">2000</text>
          <text class="dt" transform="rotate(-90 300 700)" x="300" y="700" textLength="12" lengthAdjust="spacingAndGlyphs">2000</text>
          <text class="dt" transform="rotate(-90 486 560)" x="486" y="560" textLength="12" lengthAdjust="spacingAndGlyphs">9000</text>
          <text class="dt" transform="rotate(-90 486 651)" x="486" y="651" textLength="12" lengthAdjust="spacingAndGlyphs">9000</text>
          <text class="dt" transform="rotate(-90 712 560)" x="712" y="560" textLength="12" lengthAdjust="spacingAndGlyphs">9000</text>
          <text class="dt" transform="rotate(-90 712 651)" x="712" y="651" textLength="12" lengthAdjust="spacingAndGlyphs">9000</text>
          <text class="dt" transform="rotate(-90 918 560)" x="918" y="560" textLength="12" lengthAdjust="spacingAndGlyphs">9000</text>
          <text class="dt" transform="rotate(-90 918 651)" x="918" y="651" textLength="12" lengthAdjust="spacingAndGlyphs">9000</text>
          <text class="dt" transform="rotate(-90 1144 560)" x="1144" y="560" textLength="12" lengthAdjust="spacingAndGlyphs">9000</text>
          <text class="dt" transform="rotate(-90 1144 651)" x="1144" y="651" textLength="12" lengthAdjust="spacingAndGlyphs">9000</text>
          <text class="dt" transform="rotate(-90 602 578)" x="602" y="578" textLength="12" lengthAdjust="spacingAndGlyphs">5354</text>
          <text class="dt" transform="rotate(-90 602 633)" x="602" y="633" textLength="12" lengthAdjust="spacingAndGlyphs">5354</text>
          <text class="dt" transform="rotate(-90 602 546)" x="602" y="546" textLength="10" lengthAdjust="spacingAndGlyphs">1039</text>
          <text class="dt" transform="rotate(-90 602 665)" x="602" y="665" textLength="10" lengthAdjust="spacingAndGlyphs">1039</text>
          <text class="dt" transform="rotate(-90 1030 578)" x="1030" y="578" textLength="12" lengthAdjust="spacingAndGlyphs">5354</text>
          <text class="dt" transform="rotate(-90 1030 633)" x="1030" y="633" textLength="12" lengthAdjust="spacingAndGlyphs">5354</text>
          <text class="dt" transform="rotate(-90 1030 546)" x="1030" y="546" textLength="10" lengthAdjust="spacingAndGlyphs">1039</text>
          <text class="dt" transform="rotate(-90 1030 666)" x="1030" y="666" textLength="10" lengthAdjust="spacingAndGlyphs">1039</text>
          <text class="dt" transform="rotate(-90 1263 563)" x="1263" y="563" textLength="12" lengthAdjust="spacingAndGlyphs">8250</text>
          <text class="dt" transform="rotate(-90 1263 648)" x="1263" y="648" textLength="12" lengthAdjust="spacingAndGlyphs">8250</text>
          <text class="dt" transform="rotate(-90 1371 606)" x="1371" y="606" textLength="15" lengthAdjust="spacingAndGlyphs">16500</text>
          <text class="dt" transform="rotate(-90 1332 512)" x="1332" y="512" textLength="12" lengthAdjust="spacingAndGlyphs">2000</text>
          <text class="dt" transform="rotate(-90 1332 533)" x="1332" y="533" textLength="12" lengthAdjust="spacingAndGlyphs">2000</text>
          <text class="dt" transform="rotate(-90 1332 680)" x="1332" y="680" textLength="12" lengthAdjust="spacingAndGlyphs">2000</text>
          <text class="dt" transform="rotate(-90 1332 699)" x="1332" y="699" textLength="12" lengthAdjust="spacingAndGlyphs">2000</text>
          <text class="dt" x="612" y="531" textLength="9" lengthAdjust="spacingAndGlyphs">600</text><text class="dt" x="639" y="531" textLength="9" lengthAdjust="spacingAndGlyphs">600</text>
          <text class="dt" x="612" y="686" textLength="9" lengthAdjust="spacingAndGlyphs">600</text><text class="dt" x="639" y="686" textLength="9" lengthAdjust="spacingAndGlyphs">600</text>
          <text class="dt" x="997" y="532" textLength="9" lengthAdjust="spacingAndGlyphs">600</text><text class="dt" x="1023" y="532" textLength="9" lengthAdjust="spacingAndGlyphs">600</text>
          <text class="dt" x="997" y="687" textLength="9" lengthAdjust="spacingAndGlyphs">600</text><text class="dt" x="1023" y="687" textLength="9" lengthAdjust="spacingAndGlyphs">600</text>
        </g>

        <!-- green labels -->
        <g class="lbs">
          <text x="287" y="499">GZ2c<tspan>（北）</tspan></text>
          <text x="353" y="531">GZ1-2<tspan>（北）</tspan></text>
          <text x="297" y="539">GZ2d<tspan>（北）</tspan></text>
          <text x="302" y="663">GZ2b<tspan>（北）</tspan></text>
          <text x="351" y="700">GZ1-1<tspan>（北）</tspan></text>
          <text x="303" y="708">GZ2a<tspan>（北）</tspan></text>
          <text x="517" y="512">GZ3-2<tspan>（北）</tspan></text>
          <text x="517" y="525">GZ4-2<tspan>（北）</tspan></text>
          <text x="517" y="689">GZ4-1<tspan>（北）</tspan></text>
          <text x="517" y="708">GZ3-1<tspan>（北）</tspan></text>
          <text x="618" y="562">GGZ1-1<tspan>（北）</tspan></text>
          <text x="618" y="656">GGZ1-2<tspan>（北）</tspan></text>
          <text x="736" y="507">GZ5-2<tspan>（北）</tspan></text>
          <text x="736" y="525">GZ6-2<tspan>（北）</tspan></text>
          <text x="736" y="689">GZ6-1<tspan>（北）</tspan></text>
          <text x="736" y="707">GZ5-1<tspan>（北）</tspan></text>
          <text x="855" y="507">GZ5-2<tspan>（南）</tspan></text>
          <text x="856" y="523">GZ6-2<tspan>（南）</tspan></text>
          <text x="858" y="689">GZ6-1<tspan>（南）</tspan></text>
          <text x="857" y="707">GZ5-1<tspan>（南）</tspan></text>
          <text x="985" y="562">GGZ1-1<tspan>（南）</tspan></text>
          <text x="984" y="656">GGZ1-2<tspan>（南）</tspan></text>
          <text x="1075" y="513">GZ3-2<tspan>（南）</tspan></text>
          <text x="1075" y="526">GZ4-2<tspan>（南）</tspan></text>
          <text x="1076" y="689">GZ4-1<tspan>（南）</tspan></text>
          <text x="1077" y="707">GZ3-1<tspan>（南）</tspan></text>
          <text x="1318" y="498">GZ2c<tspan>（南）</tspan></text>
          <text x="1268" y="533">GZ1-2<tspan>（南）</tspan></text>
          <text x="1312" y="560">GZ2d<tspan>（南）</tspan></text>
          <text x="1313" y="669">GZ2b<tspan>（南）</tspan></text>
          <text x="1248" y="698">GZ1-1<tspan>（南）</tspan></text>
          <text x="1311" y="727">GZ2a<tspan>（南）</tspan></text>
        </g>
        <!-- red labels -->
        <g class="rds">
          <text x="330" y="501">-0.180</text><text x="352" y="521">-0.180</text><text x="315" y="552">-0.220</text>
          <text x="330" y="669">-0.130</text><text x="352" y="689">-0.180</text><text x="315" y="719">-0.140</text>
          <text x="496" y="512">0.290</text><text x="516" y="694">0.290</text>
          <text x="633" y="548">-0.766</text><text x="645" y="669">-0.701</text>
          <text x="740" y="518">-0.339</text><text x="751" y="700">-0.379</text>
          <text x="900" y="511">0.035</text><text x="904" y="707">0.045</text>
          <text x="982" y="548">-1.180</text><text x="982" y="671">-1.170</text>
          <text x="1114" y="506">-0.335</text><text x="1121" y="707">-0.335</text>
          <text x="1292" y="496">-0.660</text><text x="1271" y="517">-0.660</text><text x="1308" y="552">-0.670</text>
          <text x="1293" y="663">-0.640</text><text x="1272" y="686">-0.620</text><text x="1314" y="720">-0.640</text>
        </g>

        <!-- notes -->
        <text class="cj ttl" x="783" y="864" textLength="85" lengthAdjust="spacingAndGlyphs">柱脚工作点平面布置图</text>
        <path class="uw" d="M782 867.500H850"/><path class="ln" d="M782 871H850"/>
        <text class="cj xs2" x="1108" y="905" textLength="14" lengthAdjust="spacingAndGlyphs">说明:</text>
        <text class="nt sn" x="1129" y="919">1</text><circle class="fwh" cx="1138" cy="915" r="3"/>
        <text class="cj xs2" x="1151" y="918" textLength="41" lengthAdjust="spacingAndGlyphs">表示柱脚工作点</text>

        <!-- compass -->
        <circle class="ring" cx="1484" cy="208" r="52"/>
        <rect class="cube1" x="1459" y="184" width="50" height="50"/>
        <rect class="cube2" x="1469" y="193" width="31" height="32"/>
        <path class="cube3" d="M1484 196V218M1470 218H1499M1484 205H1496"/>
        <text class="cmp" x="1484" y="163">北</text><text class="cmp" x="1484" y="272">南</text><text class="cmp" x="1538" y="217">东</text><text class="cmp" x="1431" y="217">西</text>
        <rect class="pill" x="1461" y="294" width="46" height="17" rx="4"/>
        <text class="pillt" x="1465" y="306">WCS</text><path class="pilla" d="M1495 301h8l-4 4z"/>

        <!-- ucs -->
        <path class="ucs" d="M60 1224V1273M60 1273H109M55.500 1268.500H64.500V1277.500H55.500ZM62 1204L67 1212L72 1204M67 1212V1220M114 1259L124 1272M124 1259L114 1272"/>
      </svg>

      <div class="cmdbar">
        <div class="cmdl"><i class="vgrip2"></i><span class="cx">✕</span><svg class="ci"><use href="#wrench"/></svg></div>
        <div class="cmdr"><svg class="ci dk"><use href="#term"/></svg><i class="c dk"></i><span class="ph">键入命令</span><i class="up"></i></div>
      </div>
    </section>

    <aside class="side right">
      <div class="vgroup">
        <i class="vgrip"></i>
        <svg class="v"><use href="#r1"/></svg><svg class="v"><use href="#r2"/></svg><svg class="v"><use href="#r3"/></svg><svg class="v"><use href="#r4"/></svg><svg class="v"><use href="#r5"/></svg><svg class="v"><use href="#r6"/></svg><svg class="v"><use href="#r7"/></svg><svg class="v"><use href="#r8"/></svg><svg class="v"><use href="#r9"/></svg><svg class="v"><use href="#r10"/></svg><svg class="v"><use href="#r11"/></svg><svg class="v"><use href="#r12"/></svg><svg class="v"><use href="#r13"/></svg><svg class="v"><use href="#r14"/></svg><svg class="v"><use href="#r15"/></svg><svg class="v"><use href="#r16"/></svg><svg class="v"><use href="#r17"/></svg><svg class="v"><use href="#r18"/></svg>
      </div>
    </aside>
  </main>

  <footer class="statusbar">
    <div class="ltabs">
      <span class="lt on">模型</span><span class="lt">布局1</span><span class="lt">布局2</span><span class="lt pl">+</span>
    </div>
    <div class="sgroup coords">750258.0922, 73216.3484, 0.0000</div>
    <div class="sgroup smodel">模型</div>
    <div class="sgroup"><svg class="si"><use href="#grid"/></svg><svg class="si"><use href="#dots"/></svg><i class="c sc"></i></div>
    <div class="sgroup"><svg class="si"><use href="#s1"/></svg><svg class="si on"><use href="#s2"/></svg><svg class="si"><use href="#s3"/></svg><svg class="si"><use href="#s4"/></svg><i class="c sc"></i><svg class="si"><use href="#s5"/></svg><i class="c sc"></i><svg class="si"><use href="#s6"/></svg><svg class="si on"><use href="#s7"/></svg><i class="c sc"></i><svg class="si"><use href="#s8"/></svg><svg class="si on"><use href="#s9"/></svg><svg class="si"><use href="#s10"/></svg><svg class="si"><use href="#s11"/></svg><i class="c sc"></i></div>
    <div class="sgroup"><svg class="si"><use href="#s12"/></svg><svg class="si"><use href="#s13"/></svg><i class="c sc"></i><svg class="si on"><use href="#s14"/></svg><i class="c sc"></i></div>
    <div class="sgroup"><svg class="si on"><use href="#s15"/></svg><svg class="si"><use href="#s16"/></svg><svg class="si"><use href="#s17"/></svg><span class="scale">1:1 / 100%</span><i class="c sc"></i></div>
    <div class="sgroup"><svg class="si"><use href="#gear"/></svg><i class="c sc"></i></div>
    <div class="sgroup"><svg class="si"><use href="#plus"/></svg></div>
    <div class="sgroup"><svg class="si"><use href="#ruler"/></svg><span class="unit">小数</span><i class="c sc"></i></div>
    <div class="sgroup"><svg class="si"><use href="#clip"/></svg></div>
    <div class="sgroup"><svg class="si"><use href="#lockw"/></svg><i class="c sc"></i></div>
    <div class="sgroup"><svg class="si"><use href="#isoa"/></svg><svg class="si on m4"><use href="#hw"/></svg><svg class="si"><use href="#isol"/></svg></div>
    <div class="sgroup"><svg class="si"><use href="#full"/></svg><svg class="si"><use href="#ham"/></svg></div>
  </footer>

  <div class="brand">知末</div>
  <div class="brand-id">ID: 1173564686</div>
  <svg class="wm" viewBox="0 0 1600 1333" xmlns="http://www.w3.org/2000/svg">
    <g class="wmg">
    <text transform="rotate(-45 -10 400)" x="-10" y="400">知末网www.znzmo.com</text>
    <text transform="rotate(-45 551 388)" x="551" y="388">知末网www.znzmo.com</text>
    <text transform="rotate(-45 1102 383)" x="1102" y="383">知末网www.znzmo.com</text>
    <text transform="rotate(-45 -148 750)" x="-148" y="750">知末网www.znzmo.com</text>
    <text transform="rotate(-45 403 750)" x="403" y="750">知末网www.znzmo.com</text>
    <text transform="rotate(-45 954 750)" x="954" y="750">知末网www.znzmo.com</text>
    <text transform="rotate(-45 1505 745)" x="1505" y="745">知末网www.znzmo.com</text>
    <text transform="rotate(-45 250 1112)" x="250" y="1112">知末网www.znzmo.com</text>
    <text transform="rotate(-45 801 1112)" x="801" y="1112">知末网www.znzmo.com</text>
    <text transform="rotate(-45 1352 1112)" x="1352" y="1112">知末网www.znzmo.com</text>
    </g>
  </svg>
</div>
</body>
</html>
```

FILE: styles.css
```css
*{box-sizing:border-box}
html,body{margin:0;padding:0;background:#000}
.defs{display:none}
.app{position:relative;width:1600px;height:1333px;overflow:hidden;display:flex;flex-direction:column;background:#222934;color:#d5d8dc;font-family:"Noto Sans","Noto Sans CJK SC",sans-serif;font-size:13px}
i,b{font-style:normal;font-weight:400;flex:none}

/* icon colour classes */
.w{fill:none;stroke:#d9dadc;stroke-width:1.300}
.wd{fill:none;stroke:#c9cbce;stroke-width:1.300}
.w2{fill:none;stroke:#e6e6e6;stroke-width:1.800}
.b{fill:none;stroke:#a9c4da;stroke-width:1.400}
.bs{fill:none;stroke:#58aee8;stroke-width:1.500}
.bs2{fill:#3b4453;stroke:#6fc0f0;stroke-width:1.200}
.gs{fill:none;stroke:#5fc66a;stroke-width:1.500}
.gy{fill:none;stroke:#c9cbce;stroke-width:1.300;stroke-dasharray:3 1}
.os{fill:none;stroke:#efa23a;stroke-width:1.500}
.o2{fill:none;stroke:#e88e5c;stroke-width:1.300}
.ds{fill:none;stroke:#2d4a6a;stroke-width:1.200}
.ds2{fill:#5e8fc6}
.fw{fill:#e6e7e8}
.fg2{fill:#c5c8cb}
.fb{fill:#62b1ea}
.fd{fill:#3b4453}
.fo{fill:#f0a12e}
.fy{fill:#e8c35a}
.fr{fill:#e8787c}
.fred{fill:#c8252b}
.fgr{fill:#5fc878}
.tf{fill:#3b4453;stroke:#333;stroke-width:1.300}
.qm{font:bold 14px "Liberation Sans",sans-serif;text-anchor:middle;fill:#3b4453}
.atxt{font:18px "Liberation Sans",sans-serif;text-anchor:middle;fill:#e6e7e8}

/* title bar */
.titlebar{height:27px;flex:none;border-top:2px solid #0696d7;display:flex;align-items:center;padding-left:9px;background:#222934}
.logo{width:16px;height:17px;flex:none;margin-right:0}
.q{width:17px;height:17px;flex:none;margin:0 3.250px}
.c{display:block;width:12px;height:8px;position:relative}
.c::before{content:"";position:absolute;left:50%;top:1px;margin-left:-3px;border:3px solid transparent;border-top:4px solid #c8ccd0;border-bottom:0}
.c.lc{margin-left:0;margin-right:12px}
.c.n10{width:10px}
.c.nar{width:12px}
.c.cbar{width:12px;margin-left:3px;margin-right:3px}
.c.cbar::after{content:"";position:absolute;left:2px;top:-3px;width:7px;height:2px;background:#c8ccd0}
.titlebar .q.dim{opacity:.45}
.share{color:#6bb8ef;font-size:12px;width:26px;white-space:nowrap;margin-top:1px}
.doc{font-size:12.200px;color:#d4d6d9;margin-left:183px;white-space:nowrap;margin-top:-2px}
.doc.file{margin-left:15px;font-size:11.800px}
.title-right{margin-left:auto;display:flex;align-items:center;height:100%}
.tri{width:0;height:0;border:4px solid transparent;border-left:5px solid #d0d0d0;border-right:0;margin-right:5px}
.search{width:174px;height:20px;background:#3b4453;color:#8d95a1;font-size:12px;font-style:italic;line-height:20px;padding-left:3px}
.sq{margin:0 3px}
.search + .sq{margin-left:4px;margin-right:4px}
.acct{font-size:11.500px;color:#d4d6d9;width:78px;margin-left:4px;white-space:nowrap}
.vs{width:1px;height:18px;background:#4a5361;margin:0 6px}
.win{display:flex;align-items:center;margin-left:56px;padding-left:7px;width:76px;height:100%}
.w-min{display:block;width:9px;height:2px;background:#d8dadc;margin:10px 14px 0 0}
.w-max{display:block;width:12px;height:12px;border:1.500px solid #d8dadc;border-top-width:2.500px;margin-right:7px}
.w-x{font-size:14px;color:#e3e3e3;line-height:1}

/* menus */
.menubar{height:21px;flex:none;display:flex;align-items:center;gap:21.900px;padding:1px 0 0 17px;border-bottom:2px solid #3a4351;background:#222934;font-size:12.500px;color:#c6c9cd}
.doc-win{display:flex;align-items:center;margin-left:auto;padding-right:5px;gap:7px}
.doc-win .w-min{margin:10px 0 0}
.w-rest{display:block;width:11px;height:11px;border:1.500px solid #d8dadc}

/* tabs */
.tabs{height:26px;flex:none;display:flex;align-items:flex-end;padding-left:14px;background:#1e2530}
.tab{height:23px;display:flex;align-items:center;font-size:11.800px;padding-bottom:2px}
.tab.start{width:132px;padding-left:21px;background:#2a323e;color:#9aa1ab;clip-path:polygon(0 100%,8px 0,100% 0,100% 100%)}
.tab.active{width:192px;padding-left:9px;background:#3b4453;color:#e4e6e8;clip-path:polygon(0 100%,5px 0,182px 0,100% 100%)}
.tab.active b{margin-left:9px;color:#a8adb4;font-size:12px}
.tab.add{width:20px;margin-left:1px;justify-content:center;background:#2a323e;color:#b8bcc2;font-size:16px}

/* toolbars */
.toolbars{height:55px;flex:none;background:#3b4453;padding:3px 0 0 5px;display:flex;flex-direction:column;gap:4px}
.row{height:22px;display:flex;align-items:center;background:#374050}
.i{width:22.600px;height:18px;padding:0 2.300px;flex:none;box-sizing:border-box}
.r2 .i{width:22.200px;padding:0 2.100px}
.r2 .i.t3{width:22.800px}
.grip{width:4px;height:19px;margin:0 1px 0 1px;background:repeating-linear-gradient(#8b929c 0 1px,transparent 1px 3px)}
.r2 > .grip:first-child{margin-right:5px}
.grip.g2{margin:0 0 0 6px}
.grip.g3{margin:0 4px 0 0}
.grip.g4{margin:0 2px 0 3px}
.grip.g5{margin:0 1px 0 4px}
.sep{width:1px;height:20px;background:#d5d8db;margin:0 2.200px}
.r2 .sep{margin:0 2.500px}
.sep.tight{margin:0 2px}
.combo{height:22px;display:flex;align-items:center;background:#fff;color:#30343a;font-size:12.500px;position:relative;flex:none;padding-left:3px}
.chev{position:absolute;right:4px;top:7px;width:6px;height:6px;border-right:1.200px solid #888;border-bottom:1.200px solid #888;transform:rotate(45deg)}
.combo.layer{width:293px;padding-left:5px;margin-left:-1px}
.li{width:15px;height:16px;margin-right:2.500px;flex:none}
.swatch{width:13px;height:14px;border:1.300px solid #222;background:#fff;margin:0 4px 0 1px}
.lname{margin-left:1px}
.combo.color{width:146px;padding-left:3px}
.combo.ltype{width:156px;padding-left:5px}
.combo.lweight{width:123px;padding-left:5px}
.lsample{height:2px;background:#555;margin-right:6px}
.ltype .lsample{width:58px}
.lweight .lsample{width:34px}
.combo.bycolor{width:116px;background:#ececec;color:#8a8d90;padding-left:11px}
.combo.dstyle{width:116px;padding-left:19px;margin-left:2px}

/* workspace */
.workspace{flex:1;display:flex;min-height:0;background:#3b4453}
.side{flex:none;background:#3b4453}
.side.left{width:32px;padding-left:4px}
.side.right{width:34px;padding-left:3px}
.vgroup{width:23px;background:#353e4c;border:1px solid #2b323e;border-top:0;padding-top:3px;display:flex;flex-direction:column;align-items:center;gap:3.350px}
.vgrip{display:block;width:14px;height:4px;margin-bottom:1px;background:repeating-linear-gradient(90deg,#8b929c 0 1px,transparent 1px 2px)}
.v{width:18px;height:18px;flex:none}
.canvas{flex:1;position:relative;background:#000;min-width:0}
.cad{display:block;width:1534px;height:1172px}

/* cad */
.sh{fill:none;stroke:#dcdcdc;stroke-width:1.300}
.ax{fill:none;stroke:#e4e4e4;stroke-width:1.500}
.ln{fill:none;stroke:#d8d8d8;stroke-width:1.200}
.uw{fill:none;stroke:#eee;stroke-width:2.500}
.dash{fill:none;stroke:#e2e2e2;stroke-width:1.100;stroke-dasharray:11 4}
.fwh{fill:#f2f2f2}
.ptf{fill:#d6d6d6}
.ptc{fill:#666}
.tkp{fill:none;stroke:#fff;stroke-width:1.100}
.cj{font-family:"Noto Sans CJK SC",sans-serif;fill:#f0f0f0;font-size:13px}
.cj.big{font-size:16px;font-weight:700}
.cj.pg{font-size:13px;font-weight:700}
.th{font-family:"Liberation Sans",sans-serif;font-weight:400;font-size:25px;fill:#eee}
.cj.sm{font-size:10px;font-weight:700}
.cj.tb{font-size:15px;font-weight:700}
.cj.tb.thin{font-weight:400}
.big5{font-size:20px}
.cj.ttl{font-size:12px;font-weight:700}
.cj.xs{font-size:11px;text-anchor:middle;fill:#cfcfcf}
.cj.xs2{font-size:6px;font-weight:700}
.cj.cs{font-size:10px;text-anchor:middle;font-weight:700}
.nt{font:14px "Liberation Sans",sans-serif;fill:#eee}
.nt.sn{font-size:11px}
.ct{font:11px "Liberation Sans",sans-serif;text-anchor:middle;fill:#eee}
.dt{font:bold 9.500px "Liberation Sans",sans-serif;text-anchor:middle;fill:#f2f2f2}
.lbs text{font:8.500px "DejaVu Sans Mono","Noto Sans CJK SC",monospace;fill:#14e014;stroke:#14e014;stroke-width:.2}
.lbs tspan{font:6.500px "Noto Sans CJK SC",sans-serif;fill:#0d8a0d;stroke:none}
.rds text{font:8.500px "DejaVu Sans Mono",monospace;letter-spacing:-.7px;fill:#f01c1c;stroke:#f01c1c;stroke-width:.2}
.ring{fill:none;stroke:#2c2c2c;stroke-width:11}
.cube1{fill:#9d9d9d;stroke:#777}
.cube2{fill:#8c8c8c}
.cube3{fill:none;stroke:#4b4b4b;stroke-width:1.500}
.cmp{font:18px "Noto Sans CJK SC",sans-serif;text-anchor:middle;fill:#9c9c9c}
.pill{fill:#7c7c84;stroke:#5a5a60}
.pillt{font:10.500px "Liberation Sans",sans-serif;fill:#4e4e52}
.pilla{fill:#95959c}
.ucs{fill:none;stroke:#d8d8d8;stroke-width:1.200}

/* command line */
.cmdbar{position:absolute;left:236px;bottom:-1px;width:1061px;height:28px;display:flex}
.cmdl{width:54px;background:#252c38;display:flex;align-items:center;padding-left:4px;gap:4px}
.vgrip2{display:block;width:4px;height:19px;background:repeating-linear-gradient(#8b929c 0 1px,transparent 1px 3px)}
.cx{color:#c9ccd0;font-size:11px;width:12px}
.ci{width:16px;height:16px;flex:none}
.ci.dk{margin:0 1px 0 3px;width:16px;height:16px}
.cmdr{flex:1;height:25px;margin-top:1px;background:#b0b0b0;display:flex;align-items:center;position:relative;border-top:2px solid #999}
.c.dk::before{border-top-color:#333}
.c.dk{width:10px}
.ph{color:#6e6e6e;font-style:italic;font-size:12.500px;margin-left:6px}
.up{position:absolute;right:4px;top:10px;border:4px solid transparent;border-bottom:5px solid #555;border-top:0}

/* status */
.statusbar{height:32px;flex:none;border-bottom:2px solid #0696d7;border-top:1px solid #46505f;background:#252c38;display:flex;align-items:flex-start;position:relative}
.ltabs{display:flex;width:359px;padding-left:18px;gap:5px}
.lt{height:16px;padding:0 6px;line-height:16px;background:#3b4453;font-size:12px;color:#c8cbcf;width:43px;text-align:center;white-space:nowrap;clip-path:polygon(0 0,100% 0,calc(100% - 4px) 100%,4px 100%)}
.lt.on{font-weight:700;color:#fff;background:#394250}
.lt:nth-child(3){margin-left:5px}
.lt.pl{width:22px;padding:0;margin-left:3px;font-size:15px}
.sgroup{height:23px;margin:1px 0 0 2px;background:#3b4453;display:flex;align-items:center;flex:none}
.coords{width:205px;justify-content:flex-end;padding-right:5px;font-size:11.600px;color:#e1e3e5;margin-left:1px}
.smodel{width:30px;justify-content:center;font-size:12.500px;font-weight:700;color:#e6e7e9}
.si{width:24.200px;height:23px;padding:3px;flex:none;display:block}
.si.on{background:#5c8fc9}
.si.m4{margin-left:4px}
.c.sc{width:15px}
.scale{width:54px;font-size:11.500px;white-space:nowrap;color:#e1e3e5}
.unit{width:54px;padding-left:5px;font-size:12px;color:#e1e3e5}

/* watermarks */
.brand{position:absolute;left:1407px;top:1194px;font:700 60px/1.150 "Noto Sans CJK SC",sans-serif;color:#c6c6c6;white-space:nowrap;letter-spacing:2px}
.brand-id{position:absolute;left:1360px;top:1276px;font:32px/36px "Liberation Sans",sans-serif;color:#ededed;white-space:nowrap;-webkit-text-stroke:.8px #ededed}
.wm{position:absolute;left:0;top:0;width:1600px;height:1333px;pointer-events:none}
.wmg{transform:translate(14px,8px)}
.wm text{font:38px "Liberation Sans","Noto Sans CJK SC",sans-serif;fill:rgba(255,255,255,.11);stroke:rgba(255,255,255,.07);stroke-width:2px}
```
